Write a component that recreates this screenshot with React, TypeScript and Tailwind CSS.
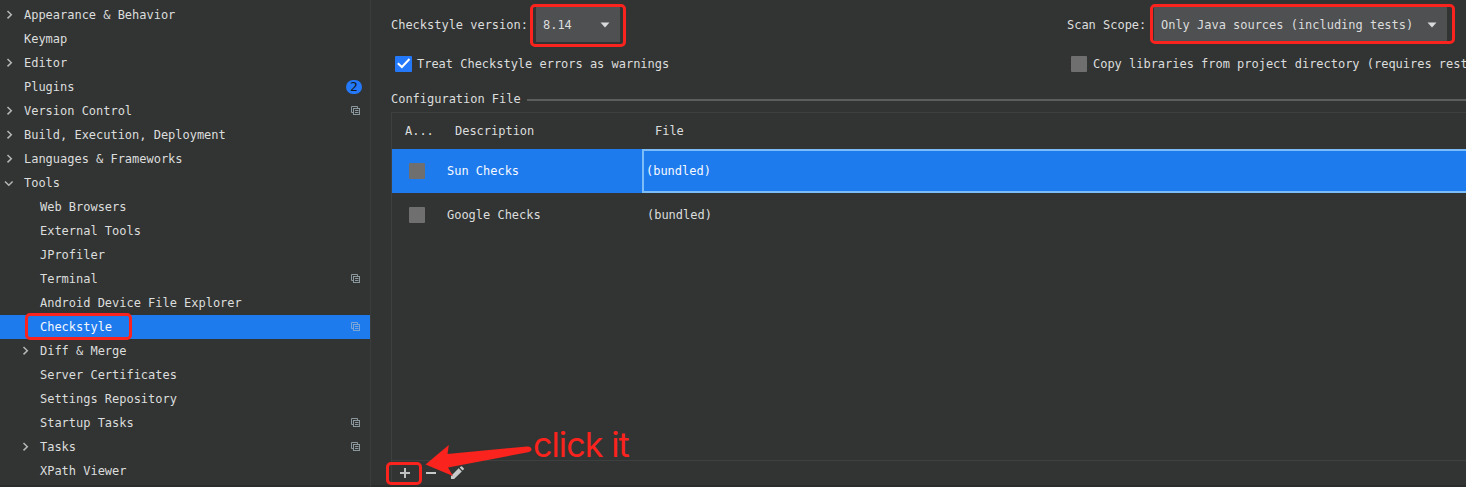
import React from 'react';

type Item = { label: string; arrow?: 'right' | 'down'; child?: boolean; copy?: boolean; badge?: string; selected?: boolean };

const items: Item[] = [
  { label: 'Appearance & Behavior', arrow: 'right' },
  { label: 'Keymap' },
  { label: 'Editor', arrow: 'right' },
  { label: 'Plugins', badge: '2' },
  { label: 'Version Control', arrow: 'right', copy: true },
  { label: 'Build, Execution, Deployment', arrow: 'right' },
  { label: 'Languages & Frameworks', arrow: 'right' },
  { label: 'Tools', arrow: 'down' },
  { label: 'Web Browsers', child: true },
  { label: 'External Tools', child: true },
  { label: 'JProfiler', child: true },
  { label: 'Terminal', child: true, copy: true },
  { label: 'Android Device File Explorer', child: true },
  { label: 'Checkstyle', child: true, copy: true, selected: true },
  { label: 'Diff & Merge', child: true, arrow: 'right' },
  { label: 'Server Certificates', child: true },
  { label: 'Settings Repository', child: true },
  { label: 'Startup Tasks', child: true, copy: true },
  { label: 'Tasks', child: true, arrow: 'right', copy: true },
  { label: 'XPath Viewer', child: true },
];

function CopyIcon({ dim }: { dim?: boolean }) {
  return (
    <svg width="10" height="10" viewBox="0 0 10 10" fill="none" stroke={dim ? '#7aa5d6' : '#8a979d'} className="mr-[9px] shrink-0">
      <path d="M2 6.5H0.5V0.5H6.5V2" />
      <rect x="2.5" y="2.5" width="6" height="6" />
      <path d="M4 4.5H7.5M4 6.5H7.5" />
    </svg>
  );
}

function Chevron({ down }: { down?: boolean }) {
  return (
    <svg width="10" height="10" viewBox="0 0 10 10" fill="none" stroke="#b5b7b7" strokeWidth="1.5">
      {down ? <path d="M1 3.5L4.8 7.2L8.6 3.5" /> : <path d="M3.5 1L7.3 4.7L3.5 8.4" />}
    </svg>
  );
}

function TreeRow({ item }: { item: Item }) {
  return (
    <div className={`flex h-6 shrink-0 items-center ${item.selected ? 'bg-[#1e7bee] text-[#f4f8fd]' : ''}`}>
      <div className={`flex shrink-0 ${item.child ? 'w-10 pl-5' : 'w-6 pl-1'}`}>
        {item.arrow && <Chevron down={item.arrow === 'down'} />}
      </div>
      <span className="relative grow">
        {item.label}
        {item.selected && <span className="absolute -top-[6px] -left-[15px] h-[27px] w-[107px] rounded-[5px] border-3 border-[#fb231d]" />}
      </span>
      {item.badge && (
        <span className="mr-2 flex h-[14px] w-4 items-center justify-center rounded-full bg-[#2479fa] text-[13px] text-[#111820]">{item.badge}</span>
      )}
      {item.copy && <CopyIcon dim={item.selected} />}
    </div>
  );
}

function Check({ on }: { on?: boolean }) {
  return on ? (
    <span className="flex h-4 w-[17px] shrink-0 items-center justify-center rounded-[1px] bg-[#2479fb]">
      <svg width="17" height="16" viewBox="0 0 17 16" fill="none" stroke="#fff" strokeWidth="2">
        <path d="M2.8 7.2L6.9 11L14.5 3" />
      </svg>
    </span>
  ) : (
    <span className="h-4 w-4 shrink-0 rounded-[1px] bg-[#6f6f6f]" />
  );
}

function Caret() {
  return (
    <svg width="10" height="6" viewBox="0 0 10 6" fill="#d9dadb">
      <path d="M0.5 0.5H9.5L5 5.5Z" />
    </svg>
  );
}

export default function App() {
  return (
    <div className="flex h-[487px] w-[1466px] overflow-hidden bg-[#323433] font-['DejaVu_Sans_Mono',monospace] text-[12px] leading-4 tracking-[-0.02px] whitespace-pre text-[#dcdddd]">
      <aside className="flex w-[371px] shrink-0 flex-col border-r border-[#3b3d3c] pt-[3px]">
        {items.map((item) => <TreeRow key={item.label} item={item} />)}
        <div className="mt-[2px] h-[2px] shrink-0 bg-[#2b2c2c]" />
      </aside>
      <main className="relative flex w-[1095px] shrink-0 flex-col">
        <div className="flex h-[49px] shrink-0 pl-5">
          <span className="w-[139px] pt-[17px]">Checkstyle version:</span>
          <div className="mt-1 h-[43px] w-[96px] rounded-[5px] border-3 border-[#fb231d] pl-[3px]">
            <div className="flex h-[35px] w-[84px] items-center justify-between bg-[#4f5052] pr-[10px] pl-[7px]">
              <span>8.14</span><Caret />
            </div>
          </div>
          <span className="ml-[441px] w-[83px] pt-[17px]">Scan Scope:</span>
          <div className="mt-1 h-[40px] w-[305px] rounded-[5px] border-3 border-[#fb231d] pl-px">
            <div className="flex h-[34px] w-[293px] items-center justify-between bg-[#4f5052] pt-[2px] pr-[10px] pl-[7px]">
              <span>Only Java sources (including tests)</span><Caret />
            </div>
          </div>
        </div>
        <div className="flex h-[30px] shrink-0 items-center pl-6">
          <div className="flex w-[676px] shrink-0 items-center"><Check on /><span className="pl-[5px]">Treat Checkstyle errors as warnings</span></div>
          <Check /><span className="shrink-0 pl-[6px]">Copy libraries from project directory (requires rest</span>
        </div>
        <div className="flex h-[33px] shrink-0 items-center gap-[6px] pt-[6px] pl-5">
          <span>Configuration File</span>
          <span className="mt-[3px] h-[2px] grow bg-[#5c5e5e]" />
        </div>
        <section className="ml-5 flex h-[349px] shrink-0 flex-col border-y border-l border-[#3e403f]">
          <div className="grid h-9 shrink-0 grid-cols-[50px_200px_1fr] items-center pl-[13px]">
            <span>A...</span><span>Description</span><span>File</span>
          </div>
          <div className="grid h-11 shrink-0 grid-cols-[55px_195px_1fr] items-center bg-[#1e7bee] text-[#f6f9fe]">
            <span className="flex pl-[17px]"><Check /></span>
            <span>Sun Checks</span>
            <span className="flex h-11 items-center border-y-2 border-l-2 border-[#7bbcf9] pl-[2px]">(bundled)</span>
          </div>
          <div className="grid h-11 shrink-0 grid-cols-[55px_200px_1fr] items-center">
            <span className="flex pl-[17px]"><Check /></span>
            <span>Google Checks</span>
            <span>(bundled)</span>
          </div>
        </section>
        <div className="ml-5 flex h-6 shrink-0 items-center border-l border-[#3e403f] pl-[7px]">
          <svg width="12" height="12" viewBox="0 0 12 12" stroke="#bfc0c0" strokeWidth="2"><path d="M1 6H11M6 1V11" /></svg>
          <svg width="12" height="12" viewBox="0 0 12 12" stroke="#c8c9c9" strokeWidth="2" className="ml-[15px]"><path d="M0 6H10" /></svg>
          <svg width="14" height="14" viewBox="0 0 14 14" fill="#c8c9c9" className="ml-[13px]"><path d="M0 10L7.7 2.3L10.8 5.4L3.1 13.1H0ZM8.7 1.5L9.8 0.4Q10.4 0 11 0.6L12.7 2.2Q13.3 2.8 12.7 3.4L11.6 4.5Z" /></svg>
        </div>
        <div className="h-[2px] shrink-0 bg-[#2b2c2c]" />
        <div className="absolute top-[462px] left-[15px] h-[23px] w-9 rounded-[5px] border-3 border-[#fb231d]" />
        <svg width="108" height="34" viewBox="0 0 108 34" fill="#fb231d" className="absolute top-[444px] left-[54px]">
          <path d="M0.5 20.5L23.8 1L22.5 10L102 2.5Q106 2.2 106.5 5Q106.8 7.4 103 8.2L23 23.5L28 32Z" />
        </svg>
        <span className="absolute top-[424px] left-[162px] font-['Inter',sans-serif] text-[34px] leading-[42px] tracking-[-0.9px] text-[#fb231d]">click it</span>
      </main>
    </div>
  );
}
